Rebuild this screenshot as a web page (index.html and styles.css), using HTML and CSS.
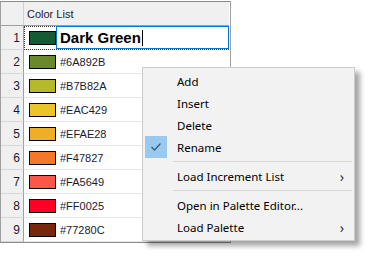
FILE: index.html
```html
<!DOCTYPE html>
<html lang="en">
<head>
    <meta charset="UTF-8">
    <title>Color List</title>
    <link rel="stylesheet" href="styles.css">
</head>
<body>
    <div class="sheet">
        <div class="head corner"></div>
        <div class="head title">Color List</div>

        <div class="num">1</div>
        <div class="cell editing">
            <span class="swatch" style="background:#145A32"></span>
            <div class="editor">Dark Green<span class="caret"></span></div>
        </div>

        <div class="num">2</div>
        <div class="cell"><span class="swatch" style="background:#6A892B"></span>#6A892B</div>
        <div class="num">3</div>
        <div class="cell"><span class="swatch" style="background:#B7B82A"></span>#B7B82A</div>
        <div class="num">4</div>
        <div class="cell"><span class="swatch" style="background:#EAC429"></span>#EAC429</div>
        <div class="num">5</div>
        <div class="cell"><span class="swatch" style="background:#EFAE28"></span>#EFAE28</div>
        <div class="num">6</div>
        <div class="cell"><span class="swatch" style="background:#F47827"></span>#F47827</div>
        <div class="num">7</div>
        <div class="cell"><span class="swatch" style="background:#FA5649"></span>#FA5649</div>
        <div class="num">8</div>
        <div class="cell"><span class="swatch" style="background:#FF0025"></span>#FF0025</div>
        <div class="num">9</div>
        <div class="cell"><span class="swatch" style="background:#77280C"></span>#77280C</div>
    </div>

    <!-- context menu over the grid -->
    <div class="menu">
        <div class="item"><span class="icon"></span>Add</div>
        <div class="item"><span class="icon"></span>Insert</div>
        <div class="item"><span class="icon"></span>Delete</div>
        <div class="item">
            <span class="icon checked">
                <svg width="12" height="10" viewBox="0 0 12 10"><path d="M1.5 5 L4.5 8 L10.5 1.5" fill="none" stroke="#3c5a78" stroke-width="1.3"/></svg>
            </span>Rename
        </div>
        <div class="sep"></div>
        <div class="item"><span class="icon"></span>Load Increment List<span class="arrow">&#x203A;</span></div>
        <div class="sep"></div>
        <div class="item"><span class="icon"></span>Open in Palette Editor...</div>
        <div class="item"><span class="icon"></span>Load Palette<span class="arrow">&#x203A;</span></div>
    </div>
</body>
</html>
```

FILE: styles.css
```css
body {
    margin: 0;
    background: white;
    font-family: 'Liberation Sans', Arial, sans-serif;
    font-size: 11px;
    color: #1a1a2e;
}

.sheet {
    display: grid;
    grid-template-columns: 23px 205px;
    grid-auto-rows: 24px;
    width: 229px;
    margin-top: 1px;
    border: 1px solid #a0a0a0;
    border-top: 1px solid #8a8a8a;
    border-bottom: 1px solid #8a8a8a;
}

.head {
    background: #f0f0f0;
    border-right: 1px solid #d0d0d0;
    border-bottom: 1px solid #a0a0a0;
}

.title {
    display: flex;
    align-items: center;
    padding-left: 3px;
    border-right: none;
}

.num {
    background: #f0f0f0;
    border-right: 1px solid #a0a0a0;
    border-bottom: 1px solid #d8d8d8;
    display: flex;
    align-items: center;
    justify-content: flex-end;
    padding-right: 3px;
    font-size: 12px;
}

.cell {
    display: flex;
    align-items: center;
    padding-left: 5px;
    border-bottom: 1px solid #e8e8e8;
    font-size: 11px;
}

.swatch {
    width: 25px;
    height: 12px;
    border: 1px solid #000;
    margin-right: 4px;
    flex-shrink: 0;
}

.cell.editing {
    position: relative;
    outline: 1px dotted #333;
    outline-offset: -1px;
}

.editor {
    position: absolute;
    left: 32px;
    top: 0;
    right: 0;
    bottom: 0;
    border: 1px solid #0078d7;
    background: white;
    display: flex;
    align-items: center;
    padding-left: 3px;
    font-size: 15px;
    font-weight: bold;
    color: #000;
}

.caret {
    width: 1px;
    height: 16px;
    background: #000;
    margin-left: 1px;
}

.menu {
    position: absolute;
    left: 142px;
    top: 67px;
    width: 211px;
    padding: 2px 0;
    background: #f2f2f2;
    border: 1px solid #cccccc;
    box-shadow: 5px 5px 5px rgba(0, 0, 0, 0.35);
    font-family: 'Noto Sans', 'Segoe UI', sans-serif;
    font-size: 11.5px;
    color: #000;
}

.item {
    display: flex;
    align-items: center;
    height: 22px;
}

.icon {
    width: 22px;
    height: 22px;
    margin: 0 10px 0 2px;
    display: flex;
    align-items: center;
    justify-content: center;
}

.icon.checked {
    background: #99c9ef;
}

.arrow {
    margin-left: auto;
    margin-right: 10px;
    font-size: 14px;
    color: #333;
}

.sep {
    height: 1px;
    background: #d7d7d7;
    margin: 3px 2px 3px 30px;
}
```
